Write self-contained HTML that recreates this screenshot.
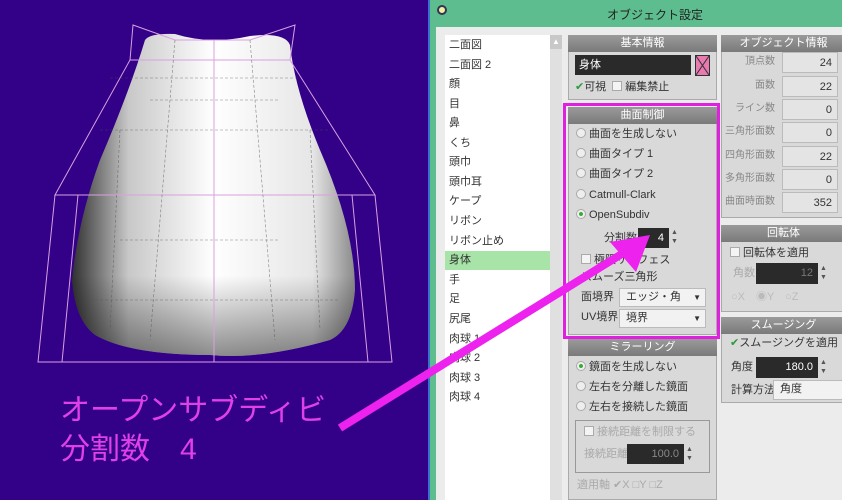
<!DOCTYPE html>
<html><head><meta charset="utf-8"><style>
*{margin:0;padding:0;box-sizing:border-box}
body{width:842px;height:500px;overflow:hidden;position:relative;background:#330088;font-family:"Liberation Sans","Noto Sans CJK JP",sans-serif;font-size:11px;color:#333}
.a{position:absolute}
.hd{position:absolute;height:17px;background:linear-gradient(#9a9a9a,#7a7a7a);color:#fff;text-align:center;line-height:17px;font-size:11px}
.pn{position:absolute;background:#d9d9d9;border:1px solid #aaa}
.t{position:absolute;white-space:nowrap;font-size:11px;line-height:14px}
.rb{display:inline-block;width:10px;height:10px;border-radius:50%;border:1px solid #aaa;background:#eee;vertical-align:-1px;margin-right:3px}
.cb{display:inline-block;width:10px;height:10px;border:1px solid #aaa;background:#f4f4f4;vertical-align:-1px;margin-right:3px}
.inp{position:absolute;background:#2a2a2a;color:#fff;text-align:right;padding-right:5px;font-size:11px}
.val{position:absolute;background:#e4e4e4;border:1px solid #bbb;text-align:right;padding-right:5px;height:21px;line-height:20px;width:56px;left:782px}
.lb{position:absolute;right:67px;text-align:right;color:#888;font-size:10px}
.sel{position:absolute;background:#f2f2f2;border:1px solid #bbb;padding-left:6px;line-height:17px}
.li{position:absolute;left:449px;line-height:14px}
</style></head><body>
<svg class="a" style="left:0;top:0" width="430" height="500">
<defs><linearGradient id="g" x1="0" x2="1"><stop offset="0" stop-color="#303030"/><stop offset=".2" stop-color="#c8c8c8"/><stop offset=".5" stop-color="#ffffff"/><stop offset=".85" stop-color="#e6e6e6"/><stop offset="1" stop-color="#8a8a8a"/></linearGradient>
<linearGradient id="gv" x1="0" y1="0" x2="0" y2="1"><stop offset=".75" stop-color="#000" stop-opacity="0"/><stop offset="1" stop-color="#000" stop-opacity=".45"/></linearGradient></defs>
<path d="M145 40 Q150 33 175 34 Q210 45 250 36 Q285 32 290 45 Q295 90 320 150 Q355 230 355 290 Q352 330 330 340 Q260 360 210 355 Q130 355 95 335 Q75 320 72 280 Q78 220 100 160 Q130 90 145 40Z" fill="url(#g)"/>
<path d="M145 40 Q150 33 175 34 Q210 45 250 36 Q285 32 290 45 Q295 90 320 150 Q355 230 355 290 Q352 330 330 340 Q260 360 210 355 Q130 355 95 335 Q75 320 72 280 Q78 220 100 160 Q130 90 145 40Z" fill="url(#gv)"/>
<g stroke="#d9a0e0" stroke-width="1" fill="none">
<path d="M133 25 L175 40 L250 40 L295 25 L290 60 L130 60 Z"/>
<path d="M130 60 L55 195 L375 195 L290 60"/>
<path d="M55 195 L38 362 L392 362 L375 195"/>
<path d="M78 195 L62 362 M352 195 L368 362 M214 40 L214 362"/>
</g>
<g stroke="#555" stroke-width=".6" stroke-dasharray="3 2" fill="none" opacity=".7">
<path d="M110 78 L300 78 M150 100 L280 100 M100 130 L330 130 M120 240 L280 240 M90 300 L340 300"/>
<path d="M175 40 L150 340 M250 40 L275 340 M120 130 L110 330 M310 130 L320 330"/>
</g>
</svg>
<div class="t" style="left:60px;top:393px;font-size:30px;line-height:36px;color:#e040e8">オープンサブディビ</div>
<div class="t" style="left:60px;top:432px;font-size:30px;line-height:36px;color:#e040e8">分割数　4</div>
<div class="a" style="left:428px;top:0;width:2px;height:500px;background:#3a6fd0"></div>
<div class="a" style="left:430px;top:0;width:412px;height:500px;background:#5dbd8e"></div>
<div class="a" style="left:437px;top:5px;width:10px;height:10px;border-radius:50%;background:#f0f0a0;border:2px solid #335"></div>
<div class="t" style="left:430px;width:450px;top:8px;text-align:center;font-size:12px;color:#222">オブジェクト設定</div>
<div class="a" style="left:436px;top:27px;width:406px;height:473px;background:#ececec"></div>
<div class="a" style="left:445px;top:35px;width:105px;height:465px;background:#fff"></div>
<div class="a" style="left:445px;top:251px;width:105px;height:19px;background:#a8e4a8"></div>
<div class="a" style="left:550px;top:35px;width:12px;height:465px;background:#e0e0e0"></div>
<div class="a" style="left:550px;top:35px;width:12px;height:14px;background:#c8c8c8;color:#fff;font-size:8px;text-align:center;line-height:14px">▲</div>
<div class="li" style="top:38px">二面図</div><div class="li" style="top:58px">二面図 2</div><div class="li" style="top:77px">顔</div><div class="li" style="top:97px">目</div><div class="li" style="top:116px">鼻</div><div class="li" style="top:136px">くち</div><div class="li" style="top:155px">頭巾</div><div class="li" style="top:175px">頭巾耳</div><div class="li" style="top:194px">ケープ</div><div class="li" style="top:214px">リボン</div><div class="li" style="top:234px">リボン止め</div><div class="li" style="top:253px">身体</div><div class="li" style="top:273px">手</div><div class="li" style="top:292px">足</div><div class="li" style="top:312px">尻尾</div><div class="li" style="top:332px">肉球 1</div><div class="li" style="top:351px">肉球 2</div><div class="li" style="top:371px">肉球 3</div><div class="li" style="top:390px">肉球 4</div>
<div class="pn" style="left:568px;top:35px;width:149px;height:65px"></div>
<div class="hd" style="left:568px;top:35px;width:149px">基本情報</div>
<div class="inp" style="left:575px;top:55px;width:116px;height:20px;text-align:left;padding-left:4px;line-height:20px">身体</div>
<div class="a" style="left:695px;top:55px;width:15px;height:21px;background:#e87ab0;border:1px solid #333"><svg width="13" height="19"><path d="M0 0L13 19M13 0L0 19" stroke="#333"/></svg></div>
<div class="t" style="left:575px;top:80px"><span style="color:#2a9a3a">✔</span>可視 <span class="cb" style="margin-left:3px"></span>編集禁止</div>
<div class="pn" style="left:568px;top:107px;width:149px;height:228px"></div>
<div class="hd" style="left:568px;top:107px;width:149px">曲面制御</div>
<div class="t" style="left:576px;top:127px"><span class="rb"></span>曲面を生成しない</div>
<div class="t" style="left:576px;top:147px"><span class="rb"></span>曲面タイプ 1</div>
<div class="t" style="left:576px;top:167px"><span class="rb"></span>曲面タイプ 2</div>
<div class="t" style="left:576px;top:188px"><span class="rb"></span>Catmull-Clark</div>
<div class="t" style="left:576px;top:208px"><span class="rb" style="background:radial-gradient(#3a3 30%,#eee 40%)"></span>OpenSubdiv</div>
<div class="t" style="left:604px;top:231px">分割数</div>
<div class="inp" style="left:638px;top:228px;width:31px;height:20px;line-height:20px">4</div>
<div class="t" style="left:671px;top:228px;font-size:7px;line-height:9px;color:#555">▲<br>▼</div>
<div class="t" style="left:581px;top:253px"><span class="cb"></span>極限サーフェス</div>
<div class="t" style="left:581px;top:270px">スムーズ三角形</div>
<div class="t" style="left:581px;top:290px">面境界</div>
<div class="sel" style="left:619px;top:288px;width:87px;height:19px">エッジ・角<span style="float:right;margin-right:4px;font-size:8px">▼</span></div>
<div class="t" style="left:581px;top:310px">UV境界</div>
<div class="sel" style="left:619px;top:309px;width:87px;height:19px">境界<span style="float:right;margin-right:4px;font-size:8px">▼</span></div>
<div class="a" style="left:563px;top:103px;width:157px;height:236px;border:3px solid #e020e0"></div>
<div class="pn" style="left:568px;top:339px;width:149px;height:161px"></div>
<div class="hd" style="left:568px;top:339px;width:149px">ミラーリング</div>
<div class="t" style="left:576px;top:360px"><span class="rb" style="background:radial-gradient(#3a3 30%,#eee 40%)"></span>鏡面を生成しない</div>
<div class="t" style="left:576px;top:380px"><span class="rb"></span>左右を分離した鏡面</div>
<div class="t" style="left:576px;top:400px"><span class="rb"></span>左右を接続した鏡面</div>
<div class="a" style="left:575px;top:420px;width:135px;height:53px;border:1px solid #999"></div>
<div class="t" style="left:584px;top:425px;color:#aaa"><span class="cb"></span>接続距離を制限する</div>
<div class="t" style="left:584px;top:447px;color:#aaa">接続距離</div>
<div class="inp" style="left:627px;top:444px;width:57px;height:20px;line-height:20px;color:#888">100.0</div>
<div class="t" style="left:686px;top:445px;font-size:7px;line-height:9px;color:#555">▲<br>▼</div>
<div class="t" style="left:577px;top:478px;color:#aaa">適用軸 ✔X □Y □Z</div>
<div class="pn" style="left:721px;top:35px;width:125px;height:183px"></div>
<div class="hd" style="left:721px;top:35px;width:125px">オブジェクト情報</div>
<div class="lb t" style="top:55px">頂点数</div><div class="val" style="top:52px">24</div>
<div class="lb t" style="top:79px">面数</div><div class="val" style="top:76px">22</div>
<div class="lb t" style="top:102px">ライン数</div><div class="val" style="top:99px">0</div>
<div class="lb t" style="top:125px">三角形面数</div><div class="val" style="top:122px">0</div>
<div class="lb t" style="top:149px">四角形面数</div><div class="val" style="top:146px">22</div>
<div class="lb t" style="top:172px">多角形面数</div><div class="val" style="top:169px">0</div>
<div class="lb t" style="top:195px">曲面時面数</div><div class="val" style="top:192px">352</div>
<div class="pn" style="left:721px;top:225px;width:125px;height:87px"></div>
<div class="hd" style="left:721px;top:225px;width:125px">回転体</div>
<div class="t" style="left:730px;top:246px"><span class="cb"></span>回転体を適用</div>
<div class="t" style="left:733px;top:266px;color:#aaa">角数</div>
<div class="inp" style="left:756px;top:263px;width:62px;height:21px;line-height:21px;color:#777">12</div>
<div class="t" style="left:820px;top:264px;font-size:7px;line-height:9px;color:#555">▲<br>▼</div>
<div class="t" style="left:731px;top:290px;color:#bbb">○X　◉Y　○Z</div>
<div class="pn" style="left:721px;top:317px;width:125px;height:86px"></div>
<div class="hd" style="left:721px;top:317px;width:125px">スムージング</div>
<div class="t" style="left:730px;top:336px"><span style="color:#2a9a3a">✔</span>スムージングを適用</div>
<div class="t" style="left:731px;top:360px">角度</div>
<div class="inp" style="left:756px;top:357px;width:62px;height:21px;line-height:21px">180.0</div>
<div class="t" style="left:820px;top:358px;font-size:7px;line-height:9px;color:#555">▲<br>▼</div>
<div class="t" style="left:731px;top:383px">計算方法</div>
<div class="sel" style="left:773px;top:380px;width:72px;height:20px">角度</div>
<svg class="a" style="left:0;top:0" width="842" height="500">
<line x1="340" y1="428" x2="625" y2="252" stroke="#ee22ee" stroke-width="8"/>
<polygon points="650,235 610,242 636,272" fill="#ee22ee"/>
</svg>
</body></html>
